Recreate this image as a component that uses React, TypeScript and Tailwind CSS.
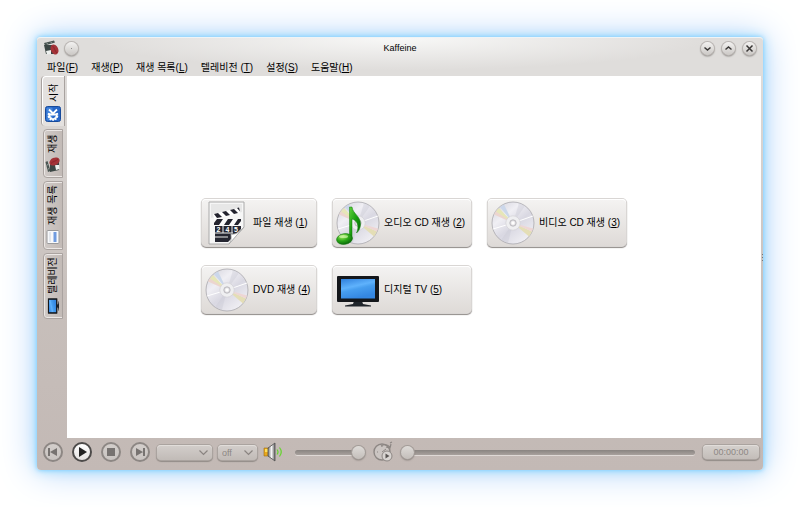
import type { ReactNode } from "react";

const round =
  "flex items-center justify-center rounded-full bg-linear-to-b";

const slider =
  "h-4 min-w-0 appearance-none bg-transparent [&::-webkit-slider-runnable-track]:h-[5px] [&::-webkit-slider-runnable-track]:rounded-full [&::-webkit-slider-runnable-track]:bg-linear-to-b [&::-webkit-slider-runnable-track]:from-[#898481] [&::-webkit-slider-runnable-track]:to-[#a8a19d] [&::-webkit-slider-runnable-track]:shadow-[0_1px_0_#dfd9d6] [&::-webkit-slider-thumb]:-mt-1 [&::-webkit-slider-thumb]:size-[13px] [&::-webkit-slider-thumb]:appearance-none [&::-webkit-slider-thumb]:rounded-full [&::-webkit-slider-thumb]:bg-linear-to-b [&::-webkit-slider-thumb]:from-[#dedbd8] [&::-webkit-slider-thumb]:to-[#c3beba] [&::-webkit-slider-thumb]:shadow-[0_0_0_1px_#a39c98,0_1px_2px_#5f5955]";

function Key({ label, k }: { label: string; k: string }) {
  return (
    <span className="whitespace-nowrap">
      {label}(<u className="underline-offset-1">{k}</u>)
    </span>
  );
}

function Disc({ id }: { id: string }) {
  return (
    <>
      <defs>
        <linearGradient id={id} x1="0" y1="0" x2="0.8" y2="1">
          <stop offset="0" stopColor="#cfced8" />
          <stop offset="0.35" stopColor="#f0eff4" />
          <stop offset="0.6" stopColor="#d9d8e2" />
          <stop offset="1" stopColor="#f3f2f6" />
        </linearGradient>
      </defs>
      <circle cx="22" cy="22" r="21" fill={`url(#${id})`} stroke="#a9a8ad" strokeWidth="0.8" />
      <path d="M22 22 3 13.5A21 21 0 0 1 7 8Z" fill="#ecd5cf" />
      <path d="M22 22 5 10.5 8 7Z" fill="#e6e6b8" />
      <path d="M22 22 9 6 13 3.4Z" fill="#cbd7ea" />
      <path d="M22 22 41 30.5 38 35.5Z" fill="#e4deb6" />
      <path d="M22 22 42 27.5 41 30.5Z" fill="#eed6d4" />
      <path d="M22 22 28 2 34 5Z" fill="#c6c5d1" opacity=".35" />
      <path d="M22 22 10 39 17 42Z" fill="#c6c5d1" opacity=".35" />
      <path d="M22 22 42 15M22 22 2 28" stroke="#fff" strokeWidth="1" />
      <circle cx="22" cy="22" r="7.2" fill="#efeff1" stroke="#d2d1d6" strokeWidth="0.7" />
      <circle cx="22" cy="22" r="3.2" fill="#e0dfe2" stroke="#b0afb4" strokeWidth="0.8" />
      <circle cx="22" cy="22" r="1.7" fill="#fff" />
    </>
  );
}

function DiscIcon({ id }: { id: string }) {
  return (
    <svg viewBox="0 0 44 44" className="size-11 shrink-0" aria-hidden="true">
      <Disc id={id} />
    </svg>
  );
}

function AudioIcon() {
  return (
    <svg viewBox="0 0 44 44" className="size-11 shrink-0" aria-hidden="true">
      <Disc id="disc-audio" />
      <defs>
        <linearGradient id="note" x1="0" y1="0" x2="1" y2="1">
          <stop offset="0" stopColor="#5fd13c" />
          <stop offset="0.5" stopColor="#159b0c" />
          <stop offset="1" stopColor="#08620a" />
        </linearGradient>
        <radialGradient id="head" cx="0.4" cy="0.25" r="0.8">
          <stop offset="0" stopColor="#a5ee62" />
          <stop offset="0.5" stopColor="#2ba718" />
          <stop offset="1" stopColor="#066208" />
        </radialGradient>
      </defs>
      <path d="M13.500 6h2.500c1 7 8.500 9 8.500 17 0 4-1.500 7-4 9 1.500-3 2-7 .5-10-1-2-3-3.500-5-4v20h-2.500Z" fill="url(#note)" stroke="#11780b" strokeWidth="0.5" />
      <ellipse cx="8.500" cy="38" rx="8" ry="5.400" transform="rotate(-9 8.500 38)" fill="url(#head)" stroke="#0b700a" strokeWidth="0.5" />
      <ellipse cx="7.500" cy="35.500" rx="4.500" ry="1.500" fill="#d8f9b4" opacity=".65" />
    </svg>
  );
}

function ClapIcon() {
  return (
    <svg viewBox="0 0 44 44" className="size-11 shrink-0" aria-hidden="true">
      <path d="M4 1h35v25L24 43H4Z" fill="#f6f6f6" stroke="#aaa" strokeWidth="1" />
      <path d="M6 3h31v8L6 17Z" fill="#e7e7e7" />
      <path d="m8 13 26-6 1 5-26 6Z" fill="#fff" />
      <path d="m9 13 4-1 4 4-5 1Zm8-2 4-1 4 4-4 1Zm8-2 4-1 4 4-4 1Zm7-2 2-.5 1 4Z" fill="#23232e" />
      <path d="M9 18h27v7H9Z" fill="#fafafa" />
      <path d="M12 18h6l-4 6H9v-2Zm11 0h5l-4 6h-5Zm10 0h3v2l-3 4h-4Z" fill="#23232e" />
      <path d="M9 25h27v3L23 41H10V25Z" fill="#252631" />
      <path d="M9 32h19M10 36h13M18 25v7M27 25v7" stroke="#eee" strokeWidth="1" />
      <g fill="#fff" fontSize="7" fontWeight="bold" fontFamily="Liberation Sans, sans-serif">
        <text x="11.500" y="31">2</text>
        <text x="20.500" y="31">4</text>
        <text x="29" y="31">5</text>
      </g>
      <path d="M24 43c3-4 2-7 2-10 4 1 9-2 13-7Z" fill="#fff" stroke="#aaa" strokeWidth="0.8" />
    </svg>
  );
}

function TvIcon({ className, id }: { className: string; id: string }) {
  return (
    <svg viewBox="0 0 44 44" className={className} aria-hidden="true">
      <defs>
        <linearGradient id={id} x1="0" y1="0" x2="0.4" y2="1">
          <stop offset="0" stopColor="#2f7fdc" />
          <stop offset="0.45" stopColor="#5fb2fc" />
          <stop offset="0.6" stopColor="#479eef" />
          <stop offset="1" stopColor="#3487e2" />
        </linearGradient>
      </defs>
      <path d="M18 33h8l1 3 8 1.500v1H9v-1l8-1.500Z" fill="#20252b" />
      <rect x="1" y="8" width="42" height="26" rx="1" fill="#14171b" />
      <rect x="5" y="11" width="34" height="19.500" fill={`url(#${id})`} />
    </svg>
  );
}

function KaffeineIcon({ className }: { className: string }) {
  return (
    <svg viewBox="0 0 16 16" className={className} aria-hidden="true">
      <path d="m1 3 10-2.500 1 2L2 5.500Z" fill="#4a5552" />
      <path d="m3 2.500 2 1.500M7 1.500l2 1.500" stroke="#8c9692" strokeWidth="1" />
      <path d="M1 5h10v9H3Z" fill="#3b4644" />
      <path d="m3 11 5-1v4l-4 .5Z" fill="#edf0ee" />
      <ellipse cx="11.500" cy="9.500" rx="3.700" ry="5.300" transform="rotate(-24 11.500 9.500)" fill="#a33338" />
      <path d="M9.500 6c2 1 2 5 4.500 7" fill="none" stroke="#8a2329" strokeWidth="0.900" />
    </svg>
  );
}

function KdeIcon() {
  return (
    <svg viewBox="0 0 16 16" className="size-4 rotate-90" aria-hidden="true">
      <rect x="0.500" y="0.500" width="15" height="15" rx="2" fill="#2666c8" stroke="#174a9b" />
      <rect x="1.500" y="1.500" width="13" height="6" rx="1" fill="#4484da" />
      <path d="M8.500 4.500a4 4 0 1 0 0 7" fill="none" stroke="#fff" strokeWidth="2.800" strokeDasharray="1.600 0.900" />
      <path d="M8.500 4.800a3.700 3.700 0 1 0 0 6.400" fill="none" stroke="#fff" strokeWidth="1.400" />
      <path d="M7.500 3.500v9M12.500 4 8.500 8l4 4" fill="none" stroke="#fff" strokeWidth="1.800" />
    </svg>
  );
}

function ListIcon() {
  return (
    <svg viewBox="0 0 16 16" className="size-4 rotate-90" aria-hidden="true">
      <rect x="1.500" y="2" width="13" height="12" rx="1" fill="#f8f9fb" stroke="#9a9a9c" />
      <path d="M3 5h10" stroke="#ccd3de" />
      <path d="M3 10h10" stroke="#6f9be0" strokeWidth="3" />
    </svg>
  );
}

function Tab({ label, icon, active = false }: { label: string; icon: ReactNode; active?: boolean }) {
  return (
    <button
      role="tab"
      aria-selected={active}
      className={
        "flex rotate-180 items-center gap-1 rounded-r-[4px] whitespace-nowrap [writing-mode:vertical-rl] [text-orientation:sideways] " +
        (active
          ? "w-6 border-y border-r border-[#a8a29f] bg-[#e4e1df] pt-1 pr-px shadow-[inset_-1px_-1px_0_#fff]"
          : "mr-0.5 w-5 border border-[#aaa3a0] bg-linear-to-l from-[#d0cac7] to-[#c2bab6] pt-1 shadow-[inset_-1px_0_0_#ece8e6,inset_0_-1px_0_#ece8e6,inset_0_1px_0_#ece8e6]")
      }
    >
      {icon}
      <span>{label}</span>
    </button>
  );
}

function Launch({ label, k, icon }: { label: string; k: string; icon: ReactNode }) {
  return (
    <button className="flex h-[47px] items-center gap-1 rounded-[4px] bg-linear-to-b from-[#f4f3f2] to-[#dedad7] pl-[3px] shadow-[inset_0_1px_0_#fff,0_0_0_1px_#d9d6d4,0_1px_1px_1px_#908b88]">
      {icon}
      <Key label={label} k={k} />
    </button>
  );
}

function WindowButton({ label, children }: { label: string; children?: ReactNode }) {
  return (
    <button
      aria-label={label}
      className={round + " size-[13px] from-[#f3f2f1] to-[#cbc8c5] shadow-[0_0_0_1px_#b9b5b2,0_1px_2px_#4c4845]"}
    >
      <svg viewBox="0 0 13 13" className="size-full" fill="none" stroke="#3a3837" strokeWidth="1.500" aria-hidden="true">
        {children}
      </svg>
    </button>
  );
}

function Transport({ label, children, active = false }: { label: string; children: ReactNode; active?: boolean }) {
  return (
    <button
      aria-label={label}
      className={
        round +
        " size-5 border-2 " +
        (active
          ? "border-[#4d4b4a] from-[#ffffff] to-[#e5e3e2] text-[#222]"
          : "border-[#8d8784] from-[#d3cecb] to-[#c9c4c1] text-[#777371]")
      }
    >
      <svg viewBox="0 0 16 16" className="size-4" fill="currentColor" aria-hidden="true">
        {children}
      </svg>
    </button>
  );
}

function Combo({ label, options, className }: { label: string; options: string[]; className: string }) {
  return (
    <div className={"relative " + className}>
      <select
        aria-label={label}
        disabled
        className="block h-[15px] w-full appearance-none rounded-[4px] bg-linear-to-b from-[#d3cecb] to-[#c1bbb7] pl-1 text-[9px] text-[#8d8784] shadow-[inset_0_1px_0_#e1ddda,0_0_0_1px_#aaa39f,0_1px_1px_1px_#938c88]"
      >
        {options.map((o) => (
          <option key={o}>{o}</option>
        ))}
      </select>
      <svg viewBox="0 0 9 6" className="pointer-events-none absolute top-[5px] right-1 h-1.5 w-[9px]" fill="none" stroke="#8a8481" strokeWidth="1.200" aria-hidden="true">
        <path d="m.5.5 4 4 4-4" />
      </svg>
    </div>
  );
}

const menus = [
  ["파일", "F"],
  ["재생", "P"],
  ["재생 목록", "L"],
  ["텔레비전 ", "T"],
  ["설정", "S"],
  ["도움말", "H"],
];

export default function App() {
  return (
    <div className="flex min-h-screen bg-white p-[37px] font-['Liberation_Sans','Noto_Sans_CJK_KR',sans-serif] text-[10px] leading-4 text-black">
      <div className="flex min-w-0 flex-1 flex-col rounded-[4px] bg-linear-to-b from-[#e3e1df] via-[#c7bfbb] via-60% to-[#c3b9b5] shadow-[0_0_4px_#7acdff,0_0_12px_#9bdcff,0_0_36px_#a9cdf8]">
        <div className="rounded-t-[4px] border-t border-[#eff4f6] bg-radial-[at_50%_0%] from-[#f8f8f7] to-[#dfdddb] to-60%">
          <header className="grid grid-cols-[1fr_auto_1fr] items-center px-1.5 pt-0.5">
            <div className="flex items-center gap-1.5">
              <KaffeineIcon className="size-4" />
              <WindowButton label="메뉴">
                <circle cx="6.500" cy="6.500" r="0.500" fill="#777" stroke="none" />
              </WindowButton>
            </div>
            <h1 className="text-[9px]">Kaffeine</h1>
            <div className="flex items-center justify-end gap-2 pr-px">
              <WindowButton label="최소화">
                <path d="m3.500 5.500 3 2.500 3-2.500" />
              </WindowButton>
              <WindowButton label="최대화">
                <path d="m3.500 7.500 3-2.500 3 2.500" />
              </WindowButton>
              <WindowButton label="닫기">
                <path d="m3.500 3.500 6 6m0-6-6 6" />
              </WindowButton>
            </div>
          </header>
          <nav className="flex gap-[13px] px-2.5 pt-1">
            {menus.map(([label, k]) => (
              <button key={k}>
                <Key label={label} k={k} />
              </button>
            ))}
          </nav>
        </div>

        <div className="flex flex-1">
          <div role="tablist" aria-orientation="vertical" className="flex w-[30px] flex-col items-end gap-[3px] pr-0.5">
            <div className="grid h-[50px]">
              <Tab active label="시작" icon={<KdeIcon />} />
            </div>
            <div className="grid h-[49px]">
              <Tab label="재생" icon={<KaffeineIcon className="size-4 rotate-90" />} />
            </div>
            <div className="grid h-[69px]">
              <Tab label="재생 목록" icon={<ListIcon />} />
            </div>
            <div className="grid h-[66px]">
              <Tab label="텔레비전" icon={<TvIcon id="tv-tab" className="size-4 rotate-90" />} />
            </div>
          </div>
          <main className="flex flex-1 items-center justify-center bg-white pb-0.5">
            <div className="grid grid-cols-[114px_138px_138px] gap-x-[17px] gap-y-5">
              <Launch label="파일 재생 " k="1" icon={<ClapIcon />} />
              <Launch label="오디오 CD 재생 " k="2" icon={<AudioIcon />} />
              <Launch label="비디오 CD 재생 " k="3" icon={<DiscIcon id="disc-vcd" />} />
              <Launch label="DVD 재생 " k="4" icon={<DiscIcon id="disc-dvd" />} />
              <Launch label="디지털 TV " k="5" icon={<TvIcon id="tv-large" className="size-11 shrink-0" />} />
            </div>
          </main>
          <div className="flex w-0.5 flex-col items-center justify-center gap-0.5">
            <span className="size-px bg-[#777]" />
            <span className="size-px bg-[#777]" />
            <span className="size-px bg-[#777]" />
          </div>
        </div>

        <footer className="flex h-8 items-center pr-1 pb-1 pl-1.5">
          <div className="flex gap-[9px]">
            <Transport label="이전">
              <path d="M3 4h2v8H3zM12 4v8L5 8z" />
            </Transport>
            <Transport label="재생" active>
              <path d="m5 3 8 5-8 5z" />
            </Transport>
            <Transport label="정지">
              <path d="M4 4h8v8H4z" />
            </Transport>
            <Transport label="다음">
              <path d="M11 4h2v8h-2zM4 4v8l7-4z" />
            </Transport>
          </div>
          <Combo label="오디오 채널" options={[""]} className="ml-[7px] w-[55px]" />
          <Combo label="자막" options={["off"]} className="ml-1.5 w-[39px]" />
          <button aria-label="음소거" className="ml-1.5">
            <svg viewBox="0 0 20 20" className="size-5" aria-hidden="true">
              <defs>
                <linearGradient id="cone" x1="0" x2="1">
                  <stop offset="0" stopColor="#777" />
                  <stop offset="0.5" stopColor="#f4f4f4" />
                  <stop offset="1" stopColor="#666" />
                </linearGradient>
              </defs>
              <path d="M1 6h5v8H1z" fill="#e9a71b" stroke="#9b6c14" strokeWidth="0.600" />
              <path d="M2 7h3v3H2z" fill="#ffdf58" />
              <path d="m5 6 7-5v18l-7-5Z" fill="url(#cone)" stroke="#4e4e4e" strokeWidth="0.800" />
              <path d="M14 7.500q2 2.500 0 5M16.500 5.500q3.500 4.500 0 9" fill="none" stroke="#63d52b" strokeWidth="1.200" />
            </svg>
          </button>
          <input type="range" aria-label="음량" defaultValue={100} className={slider + " ml-3 w-[70px]"} />
          <button aria-label="위치 이동" className="ml-[7px]">
            <svg viewBox="0 0 22 22" className="size-[22px]" fill="none" stroke="#8d8784" aria-hidden="true">
              <circle cx="10" cy="11" r="8" fill="#cbc5c2" strokeWidth="1.400" />
              <path d="M10 5v1M5 11h1M10 11l4-3" />
              <path d="M9 5c4-3 7-1 9 1M19 3l-1 4-4-1M18 2l2-1" strokeWidth="1.200" />
              <circle cx="15" cy="15" r="5" fill="#d8d4d1" />
              <path d="m13.500 12.500 4 2.500-4 2.500z" fill="#595553" stroke="none" />
            </svg>
          </button>
          <input type="range" aria-label="재생 위치" defaultValue={0} className={slider + " ml-[7px] flex-1"} />
          <button className="ml-2 h-3.5 w-14 rounded-[4px] bg-linear-to-b from-[#d5d1ce] to-[#c3bdb9] text-[9px] leading-[14px] text-[#8d8784] shadow-[inset_0_1px_0_#e1ddda,0_0_0_1px_#aaa39f,0_1px_1px_1px_#938c88]">
            00:00:00
          </button>
        </footer>
      </div>
    </div>
  );
}
